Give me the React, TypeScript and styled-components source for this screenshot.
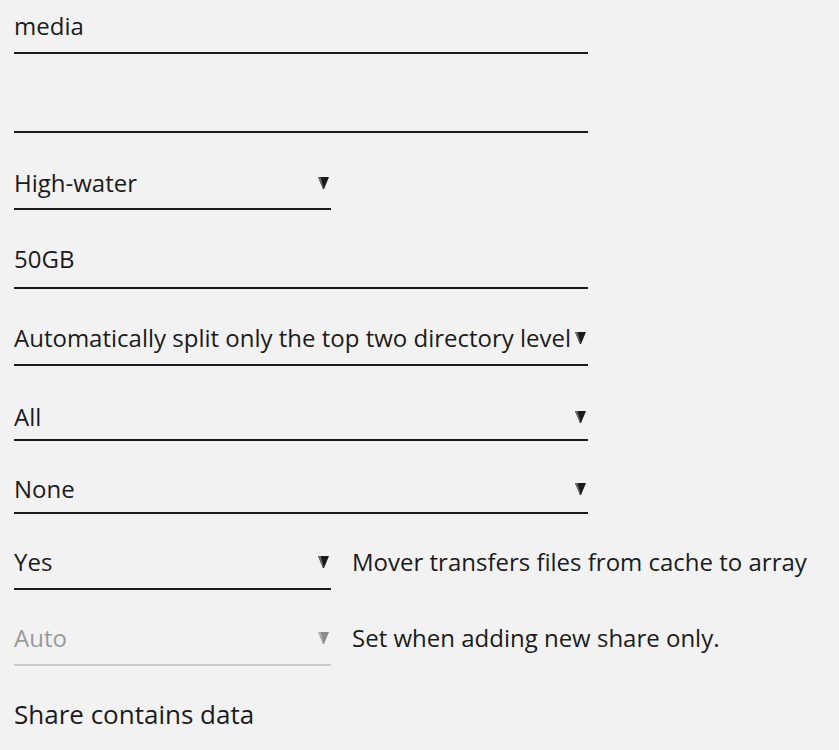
import React from 'react'
import styled, { createGlobalStyle } from 'styled-components'

const GlobalStyle = createGlobalStyle`
  html, body {
    margin: 0;
    padding: 0;
    background: #f2f2f2;
  }
  body {
    font-family: 'Open Sans', Roboto, sans-serif;
    color: #1c1b1b;
  }
`

const Page = styled.div`
  display: flex;
  flex-direction: column;
  padding: 10px 14px 0 14px;
  width: 839px;
  height: 750px;
  box-sizing: border-box;
  overflow: hidden;
`

const Row = styled.div<{ $mt: number }>`
  display: flex;
  align-items: baseline;
  gap: 21px;
  margin-top: ${({ $mt }) => $mt}px;
`

const Field = styled.div<{ $wide?: boolean; $pb: number; $disabled?: boolean }>`
  position: relative;
  box-sizing: border-box;
  width: ${({ $wide }) => ($wide ? '574px' : '317px')};
  flex-shrink: 0;
  font-size: 24px;
  line-height: 32px;
  height: ${({ $pb }) => 32 + $pb + 2}px;
  padding-bottom: ${({ $pb }) => $pb}px;
  border-bottom: 2px solid ${({ $disabled }) => ($disabled ? '#cbcbcb' : '#1c1b1b')};
  color: ${({ $disabled }) => ($disabled ? '#9a9a9a' : '#1c1b1b')};
`

// select text is cut off before the caret, like the native control
const Value = styled.div<{ $select?: boolean }>`
  white-space: nowrap;
  overflow: hidden;
  height: 32px;
  margin-right: ${({ $select }) => ($select ? '17px' : '0')};
`

const Arrow = styled.svg`
  position: absolute;
  right: 2px;
  top: 10px;
  width: 11px;
  height: 12px;
`

const Note = styled.span`
  font-size: 24px;
  line-height: 32px;
  white-space: nowrap;
  color: #1c1b1b;
`

const Label = styled.div`
  margin-top: 32px;
  font-size: 26px;
  line-height: 32px;
  color: #1c1b1b;
`

function Caret({ disabled }: { disabled?: boolean }) {
  const dark = disabled ? '#8c8c8c' : '#1c1b1b'
  const light = disabled ? '#b4b4b4' : '#6a6a6a'
  return (
    <Arrow viewBox="0 0 11 12">
      <polygon points="0,0 11,0 6,12 5,12" fill={dark} />
      <polygon points="0,0 2.5,0 5.5,11 5,12" fill={light} />
    </Arrow>
  )
}

type Item = {
  value: string
  mt: number
  pb: number
  wide?: boolean
  select?: boolean
  disabled?: boolean
  note?: string
}

const items: Item[] = [
  { value: 'media', mt: 0, pb: 10, wide: true },
  { value: '', mt: 35, pb: 10, wide: true },
  { value: 'High-water', mt: 34, pb: 9, select: true },
  { value: '50GB', mt: 33, pb: 12, wide: true },
  { value: 'Automatically split only the top two directory levels', mt: 33, pb: 10, wide: true, select: true },
  { value: 'All', mt: 35, pb: 6, wide: true, select: true },
  { value: 'None', mt: 32, pb: 7, wide: true, select: true },
  { value: 'Yes', mt: 32, pb: 10, select: true, note: 'Mover transfers files from cache to array' },
  { value: 'Auto', mt: 32, pb: 10, select: true, disabled: true, note: 'Set when adding new share only.' }
]

export default function App() {
  return (
    <>
      <GlobalStyle />
      <Page>
        {items.map((it, i) => (
          <Row key={i} $mt={it.mt}>
            <Field $wide={it.wide} $pb={it.pb} $disabled={it.disabled}>
              <Value $select={it.select}>{it.value}</Value>
              {it.select && <Caret disabled={it.disabled} />}
            </Field>
            {it.note && <Note>{it.note}</Note>}
          </Row>
        ))}
        <Label>Share contains data</Label>
      </Page>
    </>
  )
}
